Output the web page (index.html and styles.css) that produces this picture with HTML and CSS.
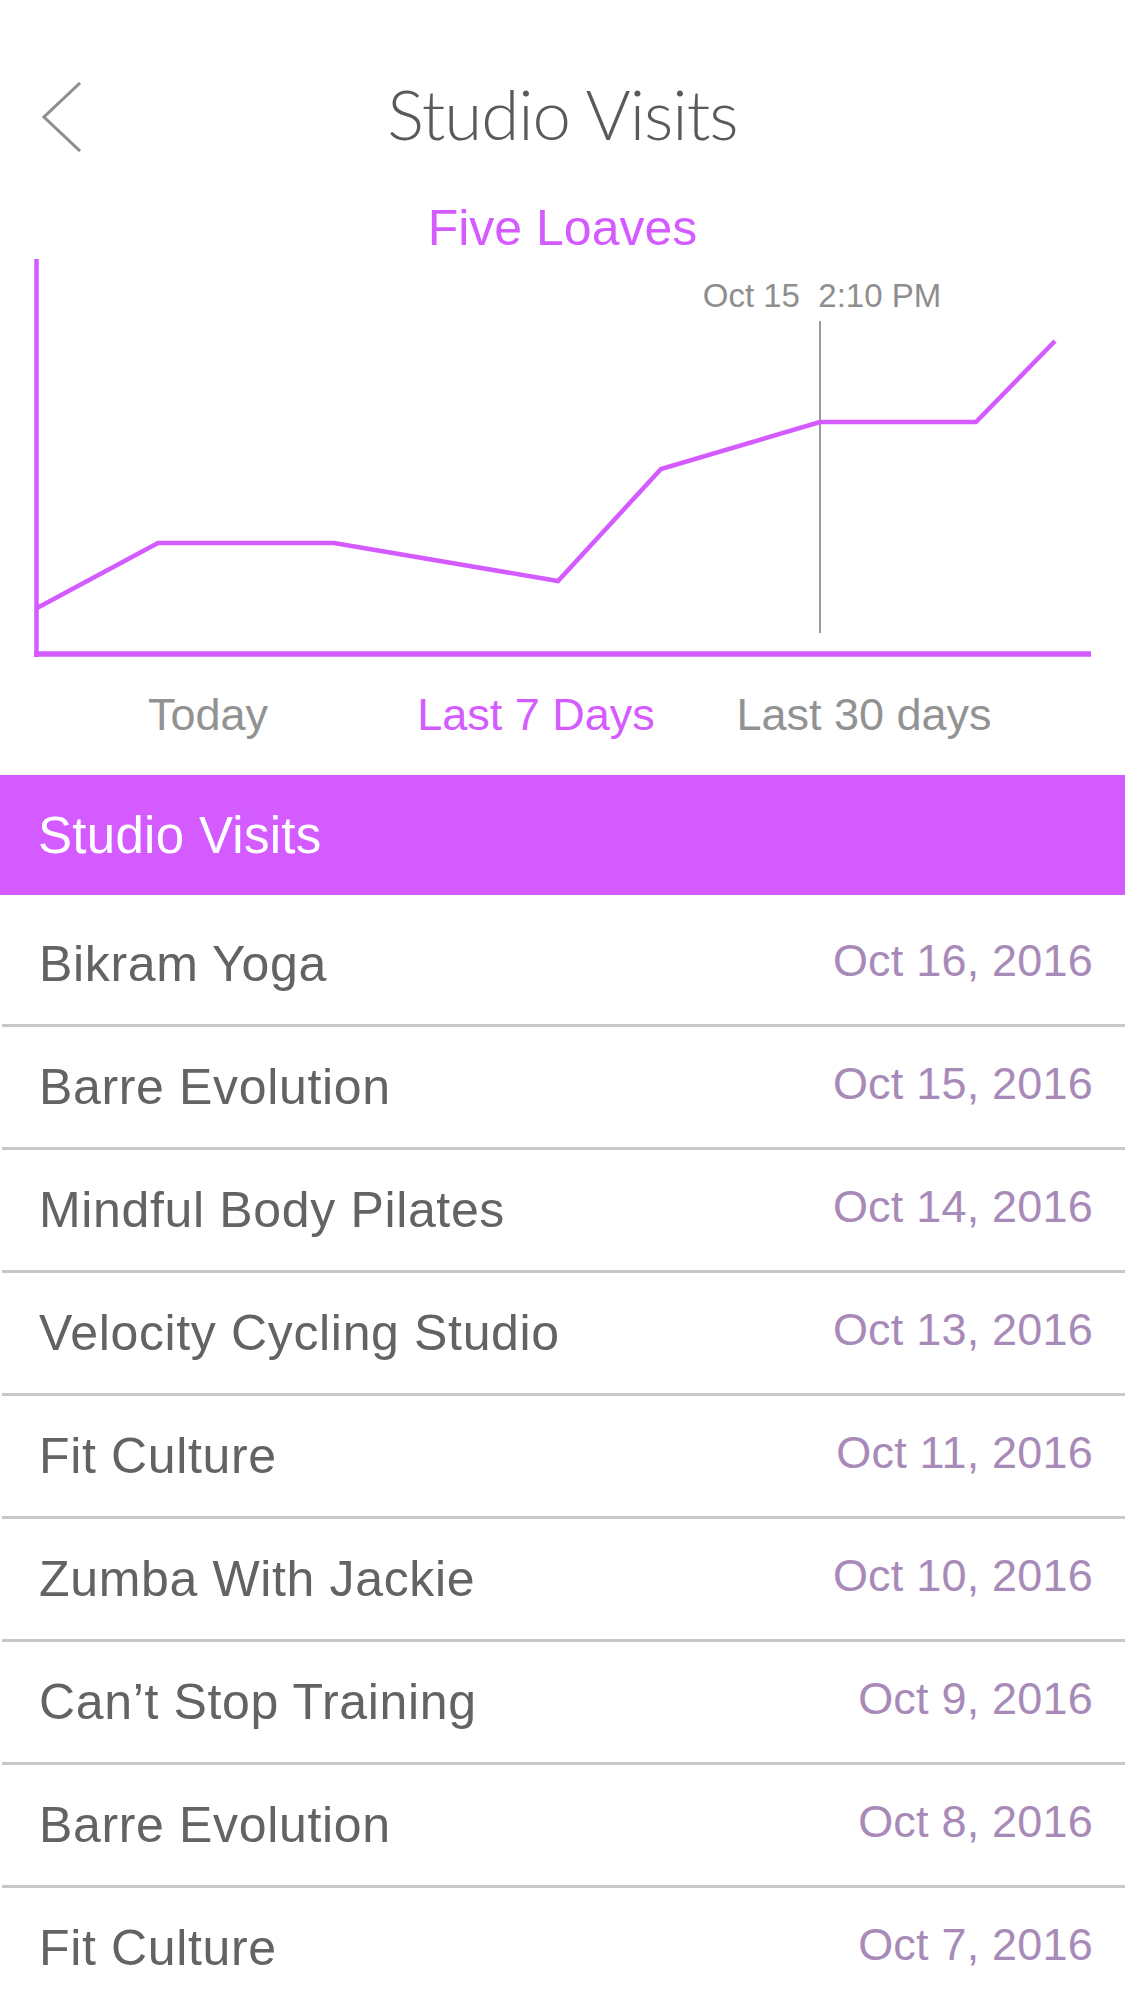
FILE: index.html
```html
<!DOCTYPE html>
<html lang="en">
<head>
<meta charset="utf-8">
<title>Studio Visits</title>
<link rel="stylesheet" href="styles.css">
</head>
<body>
<div class="screen">
  <header class="nav">
    <div class="nav-left">
      <svg class="back" width="40" height="70" viewBox="0 0 40 70" aria-label="Back">
        <polyline points="38,1 2,35 38,69" fill="none" stroke="#8e8e8e" stroke-width="3"/>
      </svg>
    </div>
    <h1 class="nav-title">Studio Visits</h1>
    <div class="nav-right"></div>
  </header>

  <h2 class="chart-title">Five Loaves</h2>

  <div class="chart">
    <svg class="chart-svg" width="1125" height="410" viewBox="0 0 1125 410">
      <line x1="36.5" y1="6" x2="36.5" y2="404" stroke="#d45bff" stroke-width="4.5"/>
      <line x1="34" y1="401" x2="1091" y2="401" stroke="#d45bff" stroke-width="5.5"/>
      <line x1="820" y1="68" x2="820" y2="380" stroke="#9a9a9a" stroke-width="2"/>
      <polyline points="37,355 158,290 334,290 558,328 661,216 820,169 976,169 1055,88" fill="none" stroke="#d45bff" stroke-width="4.5" stroke-linejoin="miter"/>
      <text class="chart-label" x="822" y="54" text-anchor="middle" xml:space="preserve">Oct 15  2:10 PM</text>
    </svg>
  </div>

  <nav class="tabs">
    <span class="tab">Today</span>
    <span class="tab tab-active">Last 7 Days</span>
    <span class="tab">Last 30 days</span>
  </nav>

  <div class="section-bar">Studio Visits</div>

  <ul class="visits">
    <li class="visit"><span class="visit-name">Bikram Yoga</span><span class="visit-date">Oct 16, 2016</span></li>
    <li class="visit"><span class="visit-name">Barre Evolution</span><span class="visit-date">Oct 15, 2016</span></li>
    <li class="visit"><span class="visit-name">Mindful Body Pilates</span><span class="visit-date">Oct 14, 2016</span></li>
    <li class="visit"><span class="visit-name">Velocity Cycling Studio</span><span class="visit-date">Oct 13, 2016</span></li>
    <li class="visit"><span class="visit-name">Fit Culture</span><span class="visit-date">Oct 11, 2016</span></li>
    <li class="visit"><span class="visit-name">Zumba With Jackie</span><span class="visit-date">Oct 10, 2016</span></li>
    <li class="visit"><span class="visit-name">Can’t Stop Training</span><span class="visit-date">Oct 9, 2016</span></li>
    <li class="visit"><span class="visit-name">Barre Evolution</span><span class="visit-date">Oct 8, 2016</span></li>
    <li class="visit"><span class="visit-name">Fit Culture</span><span class="visit-date">Oct 7, 2016</span></li>
  </ul>
</div>
</body>
</html>
```

FILE: styles.css
```css
html, body {
  margin: 0;
  padding: 0;
  background: #ffffff;
  overflow: hidden;
}

.screen {
  width: 1125px;
  font-family: "Liberation Sans", Arial, sans-serif;
  color: #666666;
}

.nav {
  display: grid;
  grid-template-columns: 1fr auto 1fr;
  align-items: center;
  height: 70px;
  padding-top: 79px;
}

.nav-left {
  display: flex;
  align-items: center;
  padding-left: 42px;
}

.back {
  display: block;
}

.nav-title {
  margin: 0;
  padding-bottom: 6px;
  font-family: "Lato", "Liberation Sans", sans-serif;
  font-weight: 300;
  font-size: 69px;
  line-height: 70px;
  letter-spacing: -1px;
  color: #5a5a5a;
}

.chart-title {
  margin: 55px 0 0;
  font-weight: normal;
  font-size: 50px;
  line-height: 49px;
  text-align: center;
  color: #d45bff;
}

.chart {
  height: 410px;
}

.chart-svg {
  display: block;
}

.chart-label {
  font-family: "Liberation Sans", Arial, sans-serif;
  font-size: 33px;
  fill: #8e8e8e;
}

.tabs {
  display: grid;
  grid-template-columns: 328px 328px 328px;
  padding-left: 44px;
  margin-top: 30px;
  font-size: 45px;
  line-height: 44px;
  color: #929292;
}

.tab {
  text-align: center;
}

.tab-active {
  color: #d45bff;
}

.section-bar {
  display: flex;
  align-items: center;
  height: 120px;
  margin-top: 38px;
  padding-left: 38px;
  background: #d45bff;
  color: #ffffff;
  font-size: 51px;
  letter-spacing: 0.3px;
}

.visits {
  list-style: none;
  margin: 0;
  padding: 9px 0 0;
}

.visit {
  display: flex;
  align-items: center;
  justify-content: space-between;
  height: 120px;
  margin-left: 2px;
  padding: 0 32px 0 37px;
  border-bottom: 3px solid #c8c8c8;
}

.visit-name {
  font-size: 50px;
  letter-spacing: 0.65px;
  color: #636363;
}

.visit-date {
  font-size: 45px;
  letter-spacing: 0.2px;
  color: #a88ab8;
  padding-bottom: 6px;
}
```
